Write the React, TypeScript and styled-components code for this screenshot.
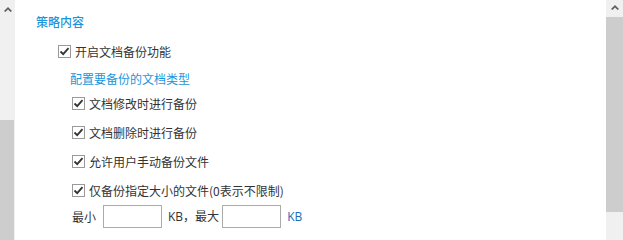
import React from "react";
import styled, { createGlobalStyle } from "styled-components";

const Global = createGlobalStyle`
  html, body { margin: 0; padding: 0; background: #fff; }
  body { font-family: "Noto Sans CJK SC", "Liberation Sans", sans-serif; }
`;

const Page = styled.div`
  width: 623px;
  height: 240px;
  display: flex;
  overflow: hidden;
  background: #fff;
`;

const Scrollbar = styled.div<{ $w: number }>`
  width: ${(p) => p.$w}px;
  flex: none;
  display: flex;
  flex-direction: column;
  background: #f0f0f0;
`;

const ArrowCell = styled.div<{ $h: number; $pad: number }>`
  height: ${(p) => p.$h}px;
  flex: none;
  display: flex;
  justify-content: center;
  padding-top: ${(p) => p.$pad}px;
  box-sizing: border-box;
`;

const Track = styled.div<{ $h: number }>`
  height: ${(p) => p.$h}px;
  flex: none;
`;

const Thumb = styled.div<{ $h: number; $w?: number }>`
  height: ${(p) => p.$h}px;
  width: ${(p) => (p.$w ? `${p.$w}px` : "100%")};
  background: #cdcdcd;
  flex: none;
`;

const Content = styled.div`
  flex: 1;
  display: flex;
  flex-direction: column;
  padding: 12px 0 0 21px;
  font-size: 12px;
  color: #333;
`;

const Heading = styled.div`
  height: 20px;
  line-height: 20px;
  color: #1a96dc;
  font-weight: 500;
`;

const CheckRow = styled.label<{ $indent: number; $top: number }>`
  display: flex;
  align-items: center;
  height: 29px;
  margin-top: ${(p) => p.$top}px;
  padding-left: ${(p) => p.$indent}px;
  gap: 4px;
  line-height: 20px;
`;

const Box = styled.span`
  width: 13px;
  height: 13px;
  box-sizing: border-box;
  border: 1px solid #9a9a9a;
  background: #fff;
  display: flex;
  align-items: center;
  justify-content: center;
  flex: none;
`;

const SubLabel = styled.div`
  height: 20px;
  line-height: 20px;
  margin-top: 3px;
  padding-left: 34px;
  color: #1a96dc;
`;

const SizeRow = styled.div`
  display: flex;
  align-items: center;
  height: 23px;
  padding-left: 36px;
  line-height: 20px;
`;

const SizeInput = styled.input<{ $ml: number }>`
  width: 59px;
  height: 23px;
  box-sizing: border-box;
  border: 1px solid #ababab;
  margin: 0 6px 0 ${(p) => p.$ml}px;
  padding: 0 4px;
  font: inherit;
  outline: none;
`;

const Unit = styled.span<{ $blue?: boolean }>`
  color: ${(p) => (p.$blue ? "#1e6bb8" : "#333")};
  font-family: "Open Sans", "Noto Sans CJK SC", sans-serif;
`;

const Up = () => (
  <svg width="8" height="5" viewBox="0 0 8 5">
    <path d="M0 4 L4 0 L8 4 L6.6 5 L4 2.4 L1.4 5 Z" fill="#606060" />
  </svg>
);

const Check = () => (
  <svg width="11" height="11" viewBox="0 0 11 11">
    <path d="M1.5 5.5 L4.2 8.2 L9.5 2.2" stroke="#333" strokeWidth="1.8" fill="none" />
  </svg>
);

const Item: React.FC<{ indent: number; top?: number; children: React.ReactNode }> = ({
  indent,
  top = 0,
  children,
}) => (
  <CheckRow $indent={indent} $top={top}>
    <Box>
      <Check />
    </Box>
    <span>{children}</span>
  </CheckRow>
);

export default function App() {
  return (
    <>
      <Global />
      <Page>
        <Scrollbar $w={15}>
          <ArrowCell $h={120} $pad={7}>
            <Up />
          </ArrowCell>
          <Thumb $h={120} $w={14} />
        </Scrollbar>
        <Content>
          <Heading>策略内容</Heading>
          <Item indent={22} top={5}>开启文档备份功能</Item>
          <SubLabel>配置要备份的文档类型</SubLabel>
          <Item indent={36}>文档修改时进行备份</Item>
          <Item indent={36}>文档删除时进行备份</Item>
          <Item indent={36}>允许用户手动备份文件</Item>
          <Item indent={36}>仅备份指定大小的文件(0表示不限制)</Item>
          <SizeRow>
            <span>最小</span>
            <SizeInput $ml={7} />
            <Unit>KB，最大</Unit>
            <SizeInput $ml={3} />
            <Unit $blue>KB</Unit>
          </SizeRow>
        </Content>
        <Scrollbar $w={17}>
          <ArrowCell $h={17} $pad={5}>
            <Up />
          </ArrowCell>
          <Thumb $h={195} />
          <Track $h={28} />
        </Scrollbar>
      </Page>
    </>
  );
}
